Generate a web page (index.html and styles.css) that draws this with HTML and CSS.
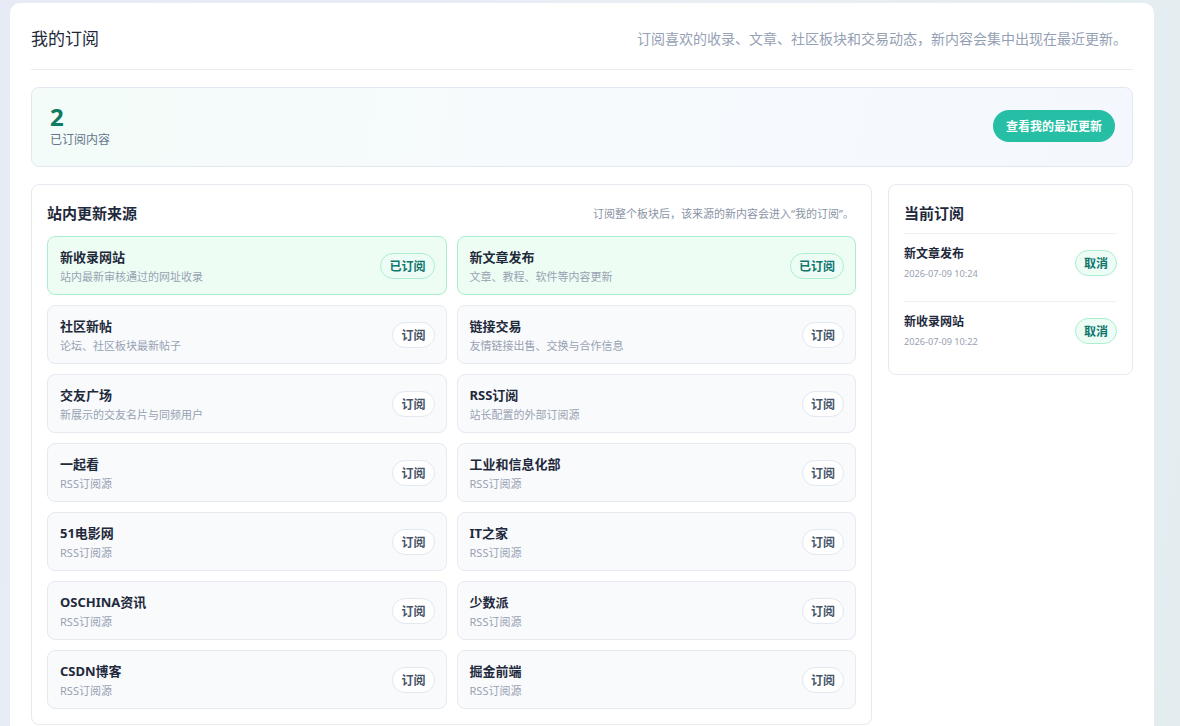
FILE: index.html
```html
<!DOCTYPE html>
<html lang="zh-CN">
<head>
  <meta charset="UTF-8">
  <title>我的订阅</title>
  <meta name="viewport" content="width=device-width, initial-scale=1.0">
  <link rel="stylesheet" href="styles.css">
</head>
<body>

  <div class="page">
    <div class="panel">

      <div class="panel-head">
        <h1>我的订阅</h1>
        <p class="subtitle">订阅喜欢的收录、文章、社区板块和交易动态，新内容会集中出现在最近更新。</p>
      </div>

      <div class="stat-card">
        <div>
          <div class="stat-num">2</div>
          <div class="stat-label">已订阅内容</div>
        </div>
        <button class="btn-main">查看我的最近更新</button>
      </div>

      <div class="layout">
        <div class="box">
          <div class="box-head">
            <h2>站内更新来源</h2>
            <span class="note">订阅整个板块后，该来源的新内容会进入“我的订阅”。</span>
          </div>

          <div class="source-grid">
            <div class="source on">
              <div>
                <div class="source-name">新收录网站</div>
                <div class="source-desc">站内最新审核通过的网址收录</div>
              </div>
              <button class="pill pill-on">已订阅</button>
            </div>
            <div class="source on">
              <div>
                <div class="source-name">新文章发布</div>
                <div class="source-desc">文章、教程、软件等内容更新</div>
              </div>
              <button class="pill pill-on">已订阅</button>
            </div>
            <div class="source">
              <div>
                <div class="source-name">社区新帖</div>
                <div class="source-desc">论坛、社区板块最新帖子</div>
              </div>
              <button class="pill">订阅</button>
            </div>
            <div class="source">
              <div>
                <div class="source-name">链接交易</div>
                <div class="source-desc">友情链接出售、交换与合作信息</div>
              </div>
              <button class="pill">订阅</button>
            </div>
            <div class="source">
              <div>
                <div class="source-name">交友广场</div>
                <div class="source-desc">新展示的交友名片与同频用户</div>
              </div>
              <button class="pill">订阅</button>
            </div>
            <div class="source">
              <div>
                <div class="source-name">RSS订阅</div>
                <div class="source-desc">站长配置的外部订阅源</div>
              </div>
              <button class="pill">订阅</button>
            </div>
            <div class="source">
              <div>
                <div class="source-name">一起看</div>
                <div class="source-desc">RSS订阅源</div>
              </div>
              <button class="pill">订阅</button>
            </div>
            <div class="source">
              <div>
                <div class="source-name">工业和信息化部</div>
                <div class="source-desc">RSS订阅源</div>
              </div>
              <button class="pill">订阅</button>
            </div>
            <div class="source">
              <div>
                <div class="source-name">51电影网</div>
                <div class="source-desc">RSS订阅源</div>
              </div>
              <button class="pill">订阅</button>
            </div>
            <div class="source">
              <div>
                <div class="source-name">IT之家</div>
                <div class="source-desc">RSS订阅源</div>
              </div>
              <button class="pill">订阅</button>
            </div>
            <div class="source">
              <div>
                <div class="source-name">OSCHINA资讯</div>
                <div class="source-desc">RSS订阅源</div>
              </div>
              <button class="pill">订阅</button>
            </div>
            <div class="source">
              <div>
                <div class="source-name">少数派</div>
                <div class="source-desc">RSS订阅源</div>
              </div>
              <button class="pill">订阅</button>
            </div>
            <div class="source">
              <div>
                <div class="source-name">CSDN博客</div>
                <div class="source-desc">RSS订阅源</div>
              </div>
              <button class="pill">订阅</button>
            </div>
            <div class="source">
              <div>
                <div class="source-name">掘金前端</div>
                <div class="source-desc">RSS订阅源</div>
              </div>
              <button class="pill">订阅</button>
            </div>
          </div>
        </div>

        <div class="box side">
          <h2 class="side-title">当前订阅</h2>
          <div class="sub-item">
            <div>
              <div class="sub-name">新文章发布</div>
              <div class="sub-time">2026-07-09 10:24</div>
            </div>
            <button class="pill pill-on">取消</button>
          </div>
          <div class="sub-item">
            <div>
              <div class="sub-name">新收录网站</div>
              <div class="sub-time">2026-07-09 10:22</div>
            </div>
            <button class="pill pill-on">取消</button>
          </div>
        </div>
      </div>

    </div>
  </div>

</body>
</html>
```

FILE: styles.css
```css
* {
  box-sizing: border-box;
}

body {
  margin: 0;
  padding: 0;
  font-family: "Noto Sans", "Noto Sans CJK SC", sans-serif;
  color: #1e293b;
  background: linear-gradient(100deg, #e6ebf5 0%, #e9eef5 50%, #e3edf0 100%);
  min-height: 100vh;
}

.page {
  padding: 3px 26px 0 10px;
}

.panel {
  background: white;
  border-radius: 10px 10px 0 0;
  padding: 0 21px 20px;
}

.panel-head {
  display: flex;
  justify-content: space-between;
  align-items: center;
  padding: 24px 0 18px;
  border-bottom: 1px solid #e8ecf1;
}

h1 {
  margin: 0;
  font-size: 17px;
  font-weight: 400;
  line-height: 24px;
  color: #1e293b;
}

.subtitle {
  margin: 0 6px 0 0;
  font-size: 14px;
  line-height: 20px;
  color: #94a0b4;
}

.stat-card {
  display: flex;
  justify-content: space-between;
  align-items: center;
  margin-top: 17px;
  padding: 15px 17px 17px 18px;
  border: 1px solid #e2e8f0;
  border-radius: 8px;
  background: linear-gradient(100deg, #f3fcf9 0%, #f7fafd 50%, #f4f7fd 100%);
}

.stat-num {
  font-size: 24px;
  font-weight: 700;
  line-height: 28px;
  color: #0f7b62;
}

.stat-label {
  font-size: 12px;
  line-height: 18px;
  color: #64748b;
}

button {
  font-family: inherit;
  cursor: pointer;
}

.btn-main {
  height: 32px;
  padding: 0 13px;
  border: none;
  border-radius: 16px;
  background-color: #26bfa5;
  color: white;
  font-size: 12px;
  font-weight: 700;
}

.layout {
  display: grid;
  grid-template-columns: 1fr 245px;
  gap: 16px;
  align-items: start;
  margin-top: 17px;
}

.box {
  border: 1px solid #e5e9f0;
  border-radius: 8px;
  padding: 18px 15px 15px;
  background: white;
}

.box-head {
  display: flex;
  justify-content: space-between;
  align-items: center;
  margin-bottom: 13px;
}

h2 {
  margin: 0;
  font-size: 15px;
  font-weight: 700;
  line-height: 20px;
  color: #1e293b;
}

.note {
  margin-right: 2px;
  font-size: 11px;
  color: #8a94a6;
}

.source-grid {
  display: grid;
  grid-template-columns: 1fr 1fr;
  gap: 10px;
}

.source {
  display: flex;
  justify-content: space-between;
  align-items: center;
  height: 59px;
  padding: 0 11px 0 12px;
  border: 1px solid #e6eaf0;
  border-radius: 8px;
  background-color: #f8fafc;
}

.source.on {
  background-color: #eefdf4;
  border-color: #a9efcc;
}

.source-name {
  font-size: 13px;
  font-weight: 700;
  line-height: 18px;
  color: #1e293b;
}

.source-desc {
  margin-top: 3px;
  font-size: 11px;
  line-height: 15px;
  color: #98a2b3;
}

.pill {
  height: 26px;
  padding: 0 8px;
  border: 1px solid #e2e8f0;
  border-radius: 13px;
  background: white;
  color: #475569;
  font-size: 12px;
  font-weight: 700;
}

.pill-on {
  background-color: #edfdf6;
  border-color: #abefd0;
  color: #0f766e;
}

.side-title {
  padding-bottom: 10px;
  border-bottom: 1px solid #eef1f5;
}

.sub-item {
  display: flex;
  justify-content: space-between;
  align-items: center;
  padding: 11px 0 10px;
}

.sub-item + .sub-item {
  margin-top: 10px;
  border-top: 1px solid #eef1f5;
}

.sub-name {
  font-size: 12px;
  font-weight: 700;
  line-height: 18px;
  color: #1e293b;
}

.sub-time {
  margin-top: 4px;
  font-size: 9.2px;
  line-height: 14px;
  color: #98a2b3;
}
```
